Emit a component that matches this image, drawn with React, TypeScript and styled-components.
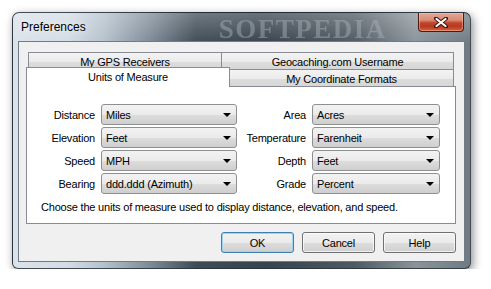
import React from 'react';
import styled, { createGlobalStyle } from 'styled-components';

const GlobalStyle = createGlobalStyle`
  html, body {
    margin: 0;
    padding: 0;
    background: #ffffff;
  }
  body {
    font-family: "Liberation Sans", Arial, sans-serif;
    font-size: 11px;
    letter-spacing: -0.2px;
    color: #000;
  }
`;

const Page = styled.div`
  padding: 12px 0 0 12px;
`;

const Window = styled.div`
  box-sizing: border-box;
  width: 459px;
  height: 257px;
  display: flex;
  flex-direction: column;
  padding: 0 5px 6px 5px;
  border: 1px solid rgba(28, 36, 44, 0.8);
  border-radius: 7px 7px 6px 6px;
  background:
    linear-gradient(180deg, rgba(255, 255, 255, 0.25) 0%, rgba(255, 255, 255, 0) 12%),
    linear-gradient(
      90deg,
      #dbe2ea 0%,
      #d3dce5 12%,
      #b4c1cc 20%,
      #7d8b97 30%,
      #3f4c57 40%,
      #37434d 55%,
      #4f5a62 75%,
      #8b949b 88%,
      #6f7a82 100%
    );
  box-shadow: 2px 3px 10px rgba(0, 0, 0, 0.45);
`;

const TitleBar = styled.div`
  height: 28px;
  display: flex;
  align-items: center;
  padding-left: 3px;
`;

const Title = styled.span`
  font-family: "Liberation Sans", Arial, sans-serif;
  font-size: 12px;
  letter-spacing: 0;
  color: #000;
  text-shadow: 0 0 6px rgba(255, 255, 255, 0.9);
`;

const Watermark = styled.span`
  margin-left: 133px;
  margin-top: 4px;
  font-family: "Liberation Serif", "Times New Roman", serif;
  font-weight: bold;
  font-size: 27px;
  line-height: 24px;
  letter-spacing: 1.5px;
  color: rgba(170, 180, 188, 0.45);
  filter: blur(0.5px);
  white-space: nowrap;
`;

const CloseButton = styled.div`
  box-sizing: border-box;
  margin-left: auto;
  margin-right: 1px;
  align-self: flex-start;
  width: 46px;
  height: 19px;
  display: flex;
  align-items: center;
  justify-content: center;
  border: 1px solid #4b1a12;
  border-top: none;
  border-radius: 0 0 4px 4px;
  background: linear-gradient(
    180deg,
    #e4a897 0%,
    #d98a74 40%,
    #c0452b 55%,
    #b83a20 75%,
    #d3643f 100%
  );
  box-shadow: inset 0 0 0 1px rgba(255, 200, 180, 0.45);
`;

const Client = styled.div`
  box-sizing: border-box;
  height: 221px;
  border: 1px solid #6f7b86;
  background: #f0f0f0;
  display: flex;
  flex-direction: column;
  padding: 10px 8px 0 7px;
`;

const TabControl = styled.div`
  display: flex;
  flex-direction: column;
`;

const TabRow = styled.div`
  display: flex;
  height: 17px;
  padding-left: 2px;
`;

const Tab = styled.div<{ $width: number; $selected?: boolean }>`
  box-sizing: border-box;
  width: ${p => p.$width}px;
  flex: 0 0 auto;
  display: flex;
  align-items: center;
  justify-content: center;
  border: 1px solid #898c95;
  border-bottom: none;
  font-size: 11px;
  white-space: nowrap;
  & + & {
    margin-left: -1px;
  }
  ${p =>
    p.$selected
      ? `
    position: relative;
    z-index: 1;
    height: 20px;
    margin-top: -2px;
    margin-left: -2px;
    padding-bottom: 1px;
    background: #ffffff;
  `
      : `
    height: 18px;
    background: linear-gradient(180deg, #f3f3f3 0%, #ebebeb 50%, #dddddd 51%, #d6d6d6 100%);
  `}
`;

const Panel = styled.div`
  box-sizing: border-box;
  width: 430px;
  height: 138px;
  border: 1px solid #898c95;
  background: #ffffff;
  padding: 17px 0 0 0;
`;

const FieldGrid = styled.div`
  display: grid;
  grid-template-columns: 74px 136px 75px 128px;
  grid-auto-rows: 21px;
  row-gap: 2px;
`;

const Label = styled.label`
  align-self: center;
  text-align: right;
  padding-right: 6px;
  font-size: 11px;
  white-space: nowrap;
`;

const Combo = styled.div`
  box-sizing: border-box;
  height: 21px;
  display: flex;
  align-items: center;
  padding: 0 4px 0 4px;
  border: 1px solid #8e8f8f;
  border-radius: 3px;
  background: linear-gradient(180deg, #f2f2f2 0%, #ebebeb 50%, #dddddd 51%, #cfcfcf 100%);
  font-size: 11px;
`;

const ComboText = styled.span`
  flex: 1;
  white-space: nowrap;
`;

const Arrow = styled.span`
  width: 0;
  height: 0;
  margin-right: 1px;
  border-left: 4px solid transparent;
  border-right: 4px solid transparent;
  border-top: 4px solid #000;
`;

const Description = styled.p`
  margin: 7px 0 0 14px;
  font-size: 11px;
  line-height: 13px;
`;

const ButtonRow = styled.div`
  display: flex;
  justify-content: flex-end;
  gap: 8px;
  margin-top: 8px;
`;

const Button = styled.div<{ $default?: boolean }>`
  box-sizing: border-box;
  width: 73px;
  height: 21px;
  display: flex;
  align-items: center;
  justify-content: center;
  border: 1px solid ${p => (p.$default ? '#3c7fb1' : '#707070')};
  border-radius: 3px;
  background: linear-gradient(180deg, #f2f2f2 0%, #ebebeb 50%, #dddddd 51%, #cfcfcf 100%);
  box-shadow: ${p =>
    p.$default ? 'inset 0 0 0 1px #9fd3f0' : 'inset 0 0 0 1px rgba(255, 255, 255, 0.7)'};
  font-size: 11px;
`;

interface Field {
  label: string;
  value: string;
}

const rows: [Field, Field][] = [
  [{ label: 'Distance', value: 'Miles' }, { label: 'Area', value: 'Acres' }],
  [{ label: 'Elevation', value: 'Feet' }, { label: 'Temperature', value: 'Farenheit' }],
  [{ label: 'Speed', value: 'MPH' }, { label: 'Depth', value: 'Feet' }],
  [{ label: 'Bearing', value: 'ddd.ddd (Azimuth)' }, { label: 'Grade', value: 'Percent' }],
];

const CloseGlyph = () => (
  <svg width="14" height="11" viewBox="0 0 14 11">
    <path d="M2 1.5 L12 9.5 M12 1.5 L2 9.5" stroke="#3a1610" strokeWidth="4" strokeLinecap="round" />
    <path d="M2.5 2 L11.5 9 M11.5 2 L2.5 9" stroke="#ffffff" strokeWidth="2.2" strokeLinecap="round" />
  </svg>
);

export default function App() {
  return (
    <Page>
      <GlobalStyle />
      <Window>
        <TitleBar>
          <Title>Preferences</Title>
          <Watermark>SOFTPEDIA</Watermark>
          <CloseButton>
            <CloseGlyph />
          </CloseButton>
        </TitleBar>
        <Client>
          <TabControl>
            <TabRow>
              <Tab $width={194}>My GPS Receivers</Tab>
              <Tab $width={233}>Geocaching.com Username</Tab>
            </TabRow>
            <TabRow>
              <Tab $width={204} $selected>
                Units of Measure
              </Tab>
              <Tab $width={225}>My Coordinate Formats</Tab>
            </TabRow>
            <Panel>
              <FieldGrid>
                {rows.map(([left, right]) => (
                  <React.Fragment key={left.label}>
                    <Label>{left.label}</Label>
                    <Combo>
                      <ComboText>{left.value}</ComboText>
                      <Arrow />
                    </Combo>
                    <Label>{right.label}</Label>
                    <Combo>
                      <ComboText>{right.value}</ComboText>
                      <Arrow />
                    </Combo>
                  </React.Fragment>
                ))}
              </FieldGrid>
              <Description>
                Choose the units of measure used to display distance, elevation, and speed.
              </Description>
            </Panel>
          </TabControl>
          <ButtonRow>
            <Button $default>OK</Button>
            <Button>Cancel</Button>
            <Button>Help</Button>
          </ButtonRow>
        </Client>
      </Window>
    </Page>
  );
}
